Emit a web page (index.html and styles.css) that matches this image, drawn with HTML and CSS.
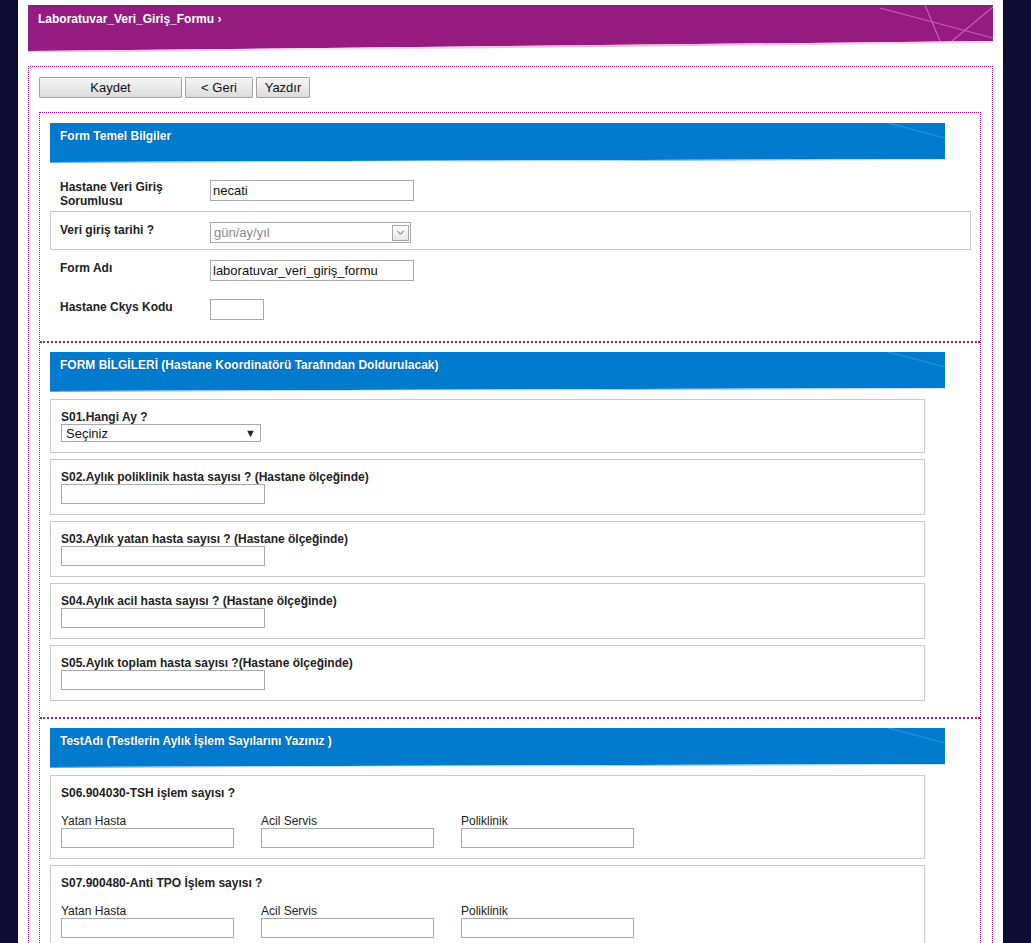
FILE: index.html
```html
<!DOCTYPE html>
<html lang="tr">
<head>
<meta charset="utf-8">
<title>Laboratuvar Veri Giriş Formu</title>
<link rel="stylesheet" href="styles.css">
</head>
<body>
<div class="panel">
  <div class="topbar">
    <svg class="bg" viewBox="0 0 965 47" preserveAspectRatio="none">
      <defs>
        <linearGradient id="pg" x1="0" x2="1" y1="0" y2="0">
          <stop offset="0" stop-color="#e8b9df"/>
          <stop offset="0.3" stop-color="#f6e2f1"/>
          <stop offset="0.6" stop-color="#e7b4dc"/>
          <stop offset="1" stop-color="#f3d6ec"/>
        </linearGradient>
      </defs>
      <polygon points="0,0 965,0 965,36 0,46" fill="#951b81"/>
      <polygon points="0,46 965,36 965,38 0,48" fill="url(#pg)"/>
      <line x1="852" y1="3" x2="965" y2="33" stroke="#c462b4" stroke-width="1.2"/>
      <line x1="897" y1="0" x2="912" y2="36" stroke="#c462b4" stroke-width="1.2"/>
      <line x1="965" y1="2" x2="924" y2="36" stroke="#c462b4" stroke-width="1.2"/>
    </svg>
    <span class="topbar-title">Laboratuvar_Veri_Giriş_Formu ›</span>
  </div>

  <div class="outer">
    <div class="toolbar">
      <button class="btn btn-wide">Kaydet</button>
      <button class="btn btn-back">&lt; Geri</button>
      <button class="btn btn-print">Yazdır</button>
    </div>

    <div class="inner">
      <section class="sect sect-first">
        <div class="band">
          <svg class="bg" viewBox="0 0 895 40" preserveAspectRatio="none">
            <defs>
              <linearGradient id="bg1" x1="0" x2="1" y1="0" y2="0">
                <stop offset="0" stop-color="#5aaee6"/>
                <stop offset="0.4" stop-color="#e8f3fb"/>
                <stop offset="0.75" stop-color="#7dbfea"/>
                <stop offset="1" stop-color="#d2e9f8"/>
              </linearGradient>
            </defs>
            <polygon points="0,0 895,0 895,36 0,39" fill="#027bce"/>
            <polygon points="0,39 895,36 895,37 0,40" fill="url(#bg1)"/>
            <line x1="838" y1="0" x2="895" y2="15" stroke="#2f93da" stroke-width="1.2"/>
          </svg>
          <span class="band-title">Form Temel Bilgiler</span>
        </div>

        <div class="frow frow-1">
          <div class="flabel">Hastane Veri Giriş Sorumlusu</div>
          <input class="txt txt-main" type="text" value="necati">
        </div>
        <div class="frow frow-2">
          <div class="flabel">Veri giriş tarihi ?</div>
          <div class="datesel">
            <span class="datesel-text">gün/ay/yıl</span>
            <span class="datesel-btn">
              <svg viewBox="0 0 16 16" width="16" height="16"><polyline points="4,6 8,10 12,6" fill="none" stroke="#555" stroke-width="1.2"/></svg>
            </span>
          </div>
        </div>
        <div class="frow frow-3">
          <div class="flabel">Form Adı</div>
          <input class="txt txt-main" type="text" value="laboratuvar_veri_giriş_formu">
        </div>
        <div class="frow frow-4">
          <div class="flabel">Hastane Ckys Kodu</div>
          <input class="txt txt-code" type="text" value="">
        </div>
      </section>

      <section class="sect">
        <div class="band">
          <svg class="bg" viewBox="0 0 895 40" preserveAspectRatio="none">
            <defs>
              <linearGradient id="bg2" x1="0" x2="1" y1="0" y2="0">
                <stop offset="0" stop-color="#5aaee6"/>
                <stop offset="0.4" stop-color="#e8f3fb"/>
                <stop offset="0.75" stop-color="#7dbfea"/>
                <stop offset="1" stop-color="#d2e9f8"/>
              </linearGradient>
            </defs>
            <polygon points="0,0 895,0 895,36 0,39" fill="#027bce"/>
            <polygon points="0,39 895,36 895,37 0,40" fill="url(#bg2)"/>
            <line x1="838" y1="0" x2="895" y2="15" stroke="#2f93da" stroke-width="1.2"/>
          </svg>
          <span class="band-title">FORM BİLGİLERİ (Hastane Koordinatörü Tarafından Doldurulacak)</span>
        </div>

        <div class="qbox">
          <div class="qlabel">S01.Hangi Ay ?</div>
          <div class="monthsel"><span>Seçiniz</span><span class="caret">▼</span></div>
        </div>
        <div class="qbox">
          <div class="qlabel">S02.Aylık poliklinik hasta sayısı ? (Hastane ölçeğinde)</div>
          <input class="txt txt-q" type="text">
        </div>
        <div class="qbox">
          <div class="qlabel">S03.Aylık yatan hasta sayısı ? (Hastane ölçeğinde)</div>
          <input class="txt txt-q" type="text">
        </div>
        <div class="qbox">
          <div class="qlabel">S04.Aylık acil hasta sayısı ? (Hastane ölçeğinde)</div>
          <input class="txt txt-q" type="text">
        </div>
        <div class="qbox">
          <div class="qlabel">S05.Aylık toplam hasta sayısı ?(Hastane ölçeğinde)</div>
          <input class="txt txt-q" type="text">
        </div>
      </section>

      <section class="sect">
        <div class="band">
          <svg class="bg" viewBox="0 0 895 40" preserveAspectRatio="none">
            <defs>
              <linearGradient id="bg3" x1="0" x2="1" y1="0" y2="0">
                <stop offset="0" stop-color="#5aaee6"/>
                <stop offset="0.4" stop-color="#e8f3fb"/>
                <stop offset="0.75" stop-color="#7dbfea"/>
                <stop offset="1" stop-color="#d2e9f8"/>
              </linearGradient>
            </defs>
            <polygon points="0,0 895,0 895,36 0,39" fill="#027bce"/>
            <polygon points="0,39 895,36 895,37 0,40" fill="url(#bg3)"/>
            <line x1="838" y1="0" x2="895" y2="15" stroke="#2f93da" stroke-width="1.2"/>
          </svg>
          <span class="band-title">TestAdı (Testlerin Aylık İşlem Sayılarını Yazınız )</span>
        </div>

        <div class="qbox qbox-test">
          <div class="qlabel">S06.904030-TSH işlem sayısı ?</div>
          <div class="cols">
            <div class="col"><div class="sublabel">Yatan Hasta</div><input class="txt txt-col" type="text"></div>
            <div class="col"><div class="sublabel">Acil Servis</div><input class="txt txt-col" type="text"></div>
            <div class="col"><div class="sublabel">Poliklinik</div><input class="txt txt-col" type="text"></div>
          </div>
        </div>
        <div class="qbox qbox-test">
          <div class="qlabel">S07.900480-Anti TPO İşlem sayısı ?</div>
          <div class="cols">
            <div class="col"><div class="sublabel">Yatan Hasta</div><input class="txt txt-col" type="text"></div>
            <div class="col"><div class="sublabel">Acil Servis</div><input class="txt txt-col" type="text"></div>
            <div class="col"><div class="sublabel">Poliklinik</div><input class="txt txt-col" type="text"></div>
          </div>
        </div>
      </section>
    </div>
  </div>
</div>
</body>
</html>
```

FILE: styles.css
```css
* { box-sizing: border-box; }

html, body {
  margin: 0;
  padding: 0;
  background: #0e0b35;
  font-family: "Liberation Sans", Arial, sans-serif;
  font-size: 12px;
  color: #222;
}

body { overflow: hidden; height: 943px; }

.panel {
  margin-left: 18px;
  width: 985px;
  min-height: 943px;
  background: #fff;
  padding: 5px 10px 0 10px;
}

.bg {
  position: absolute;
  left: 0;
  top: 0;
  width: 100%;
  height: 100%;
  display: block;
}

.topbar {
  position: relative;
  height: 47px;
  margin-bottom: 14px;
}

.topbar-title {
  position: relative;
  display: block;
  padding: 7px 0 0 10px;
  line-height: 14px;
  font-weight: bold;
  font-size: 12px;
  color: #fff;
}

.outer {
  border: 1px dotted #cc00a0;
  border-bottom: none;
  padding: 10px 11px 0 10px;
}

.toolbar {
  display: flex;
  gap: 3px;
  height: 21px;
  margin-bottom: 14px;
}

.btn {
  height: 21px;
  border: 1px solid #a3a3a3;
  border-radius: 1px;
  background: linear-gradient(#f6f6f6, #dcdcdc);
  font-family: "Liberation Sans", Arial, sans-serif;
  font-size: 13px;
  color: #111;
  padding: 0;
  line-height: 19px;
}
.btn-wide { width: 143px; }
.btn-back { width: 68px; }
.btn-print { width: 54px; }

.inner {
  border: 1px dotted #cc00a0;
  border-bottom: none;
  padding: 0 9px 0 10px;
}

.sect {
  border-top: 2px dotted #a31b80;
  margin: 0 -9px 0 -10px;
  padding: 9px 9px 16px 10px;
}
.sect-first {
  border-top: none;
  padding-top: 10px;
  padding-bottom: 0;
}

.band {
  position: relative;
  width: 895px;
  height: 40px;
  margin-bottom: 7px;
}
.sect-first .band { margin-bottom: 0; }

.band-title {
  position: relative;
  display: block;
  padding: 6px 0 0 10px;
  line-height: 14px;
  font-weight: bold;
  font-size: 12px;
  color: #fff;
  text-shadow: 0 0 1px rgba(0, 40, 90, 0.6);
}

.frow {
  display: flex;
  align-items: flex-start;
  padding-left: 10px;
}
.flabel {
  width: 150px;
  flex: none;
  font-weight: bold;
  line-height: 14px;
  color: #222;
}
.frow-1 { height: 48px; padding-top: 17px; }
.frow-1 .flabel { width: 130px; margin-right: 20px; }
.frow-2 {
  width: 921px;
  height: 39px;
  border: 1px solid #c9c9c9;
  padding-top: 10px;
  padding-left: 9px;
}
.frow-2 .flabel { margin-top: 1px; }
.frow-3 { height: 39px; padding-top: 10px; }
.frow-3 .flabel { margin-top: 1px; }
.frow-4 { height: 52px; padding-top: 10px; }
.frow-4 .flabel { margin-top: 1px; }

.txt {
  height: 21px;
  border: 1px solid #a9a9a9;
  font-family: "Liberation Sans", Arial, sans-serif;
  font-size: 13px;
  color: #111;
  padding: 0 2px;
  background: #fff;
  outline: none;
}
.txt-main { width: 204px; }
.txt-code { width: 54px; }
.txt-q { width: 204px; height: 20px; display: block; }
.txt-col { width: 173px; height: 20px; display: block; }

.datesel {
  width: 201px;
  height: 21px;
  border: 1px solid #a9a9a9;
  display: flex;
  align-items: center;
  justify-content: space-between;
  padding-left: 3px;
  padding-right: 1px;
}
.datesel-text { color: #8a8a8a; font-size: 13px; }
.datesel-btn {
  width: 17px;
  height: 16px;
  border: 1px solid #a6a6a6;
  background: linear-gradient(#fbfbfb, #e6e6e6);
  display: flex;
  align-items: center;
  justify-content: center;
}
.datesel-btn svg { width: 13px; height: 13px; }

.qbox {
  width: 875px;
  border: 1px solid #c9c9c9;
  padding: 10px 10px 10px 10px;
  margin-bottom: 6px;
}
.qbox:last-child { margin-bottom: 0; }

.qlabel {
  font-weight: bold;
  line-height: 14px;
  color: #222;
}

.monthsel {
  width: 200px;
  height: 18px;
  border: 1px solid #a9a9a9;
  display: flex;
  align-items: center;
  justify-content: space-between;
  padding: 0 4px 0 4px;
  font-size: 13px;
  color: #111;
}
.caret { font-size: 11px; color: #222; }

.qbox-test .qlabel { margin-bottom: 14px; }

.cols { display: flex; }
.col { width: 200px; }
.sublabel {
  line-height: 14px;
  color: #222;
  font-size: 12px;
}
```
